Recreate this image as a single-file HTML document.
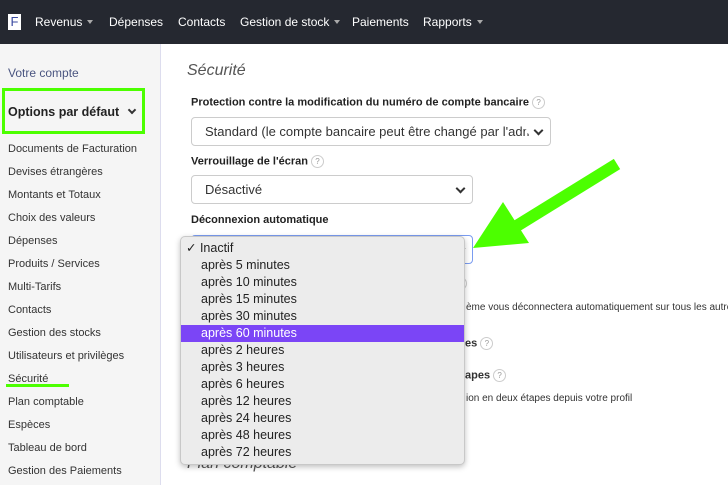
<!DOCTYPE html>
<html><head><meta charset="utf-8"><style>
*{box-sizing:border-box;margin:0;padding:0}
body{width:728px;height:485px;overflow:hidden;font-family:"Liberation Sans",Arial,sans-serif;background:#fff;position:relative;color:#333}
.nav{position:absolute;left:0;top:0;width:728px;height:44px;background:#252830;color:#fff;font-size:12px}
.nav span{position:absolute;top:15px}
.logo{position:absolute;left:8px;top:14px;width:13px;height:16px;background:#fff;color:#3a4aa0;font-size:13px;line-height:16px;text-align:center}
.car{display:inline-block;border-left:3.5px solid transparent;border-right:3.5px solid transparent;border-top:4px solid #aaa;vertical-align:2px;margin-left:5px}
.side{position:absolute;left:0;top:44px;width:161px;height:441px;background:#f5f5f5;border-right:1px solid #dde}
.side div{position:absolute;left:8px;font-size:11px;color:#333}
.q{display:inline-block;width:13px;height:13px;border:1px solid #ccc;border-radius:50%;font-size:8px;line-height:11px;text-align:center;color:#999;vertical-align:middle;font-weight:normal}
.lbl{position:absolute;left:191px;font-size:11px;font-weight:bold;color:#222}
.sel{position:absolute;left:191px;height:29px;border:1px solid #ccc;border-radius:4px;font-size:13px;padding:6px 0 0 13px;color:#333;overflow:hidden;white-space:nowrap;background:#fff}
.chev{position:absolute;right:8px;top:9px;width:7px;height:7px;border-right:2px solid #333;border-bottom:2px solid #333;transform:rotate(45deg)}
.dd{position:absolute;left:180px;top:236px;width:285px;height:229px;background:#ececec;border:1px solid #c8c8c8;border-radius:5px;box-shadow:0 2px 6px rgba(0,0,0,.25);font-size:12.5px;color:#222}
.dd div{position:absolute;left:0;width:100%;height:17px;padding-left:20px;line-height:17px}
.dd .hi{background:#7b45f6;color:#fff}
.t{position:absolute;font-size:10px;color:#333;white-space:nowrap}
</style></head><body>
<div class="nav">
<div class="logo">F</div>
<span style="left:35px">Revenus<i class="car"></i></span>
<span style="left:109px">Dépenses</span>
<span style="left:178px">Contacts</span>
<span style="left:240px">Gestion de stock<i class="car"></i></span>
<span style="left:352px">Paiements</span>
<span style="left:423px">Rapports<i class="car"></i></span>
</div>
<div class="side">
<div style="top:22px;font-size:12px;color:#4a5580">Votre compte</div>
<div style="left:2px;top:44px;width:143px;height:46px;border:3px solid #4cff00"></div>
<div style="top:61px;font-size:12.5px;font-weight:bold;color:#222">Options par défaut <span style="display:inline-block;width:6px;height:6px;border-right:2px solid #333;border-bottom:2px solid #333;transform:rotate(45deg);margin-left:6px;vertical-align:3px"></span></div>
<div style="top:99px">Documents de Facturation</div>
<div style="top:122px">Devises étrangères</div>
<div style="top:145px">Montants et Totaux</div>
<div style="top:168px">Choix des valeurs</div>
<div style="top:191px">Dépenses</div>
<div style="top:214px">Produits / Services</div>
<div style="top:237px">Multi-Tarifs</div>
<div style="top:260px">Contacts</div>
<div style="top:283px">Gestion des stocks</div>
<div style="top:306px">Utilisateurs et privilèges</div>
<div style="top:329px">Sécurité</div>
<div style="left:6px;top:340px;width:63px;height:3px;background:#4cff00"></div>
<div style="top:352px">Plan comptable</div>
<div style="top:375px">Espèces</div>
<div style="top:398px">Tableau de bord</div>
<div style="top:421px">Gestion des Paiements</div>
</div>
<div style="position:absolute;left:187px;top:62px;font-size:16px;font-style:italic;color:#555">Sécurité</div>
<div class="lbl" style="top:96px">Protection contre la modification du numéro de compte bancaire <span class="q">?</span></div>
<div class="sel" style="top:117px;width:360px;padding-right:28px">Standard (le compte bancaire peut être changé par l'adm<i class="chev" style="background:#fff;box-shadow:0 0 0 6px #fff"></i></div>
<div class="lbl" style="top:155px">Verrouillage de l'écran <span class="q">?</span></div>
<div class="sel" style="top:175px;width:282px">Désactivé<i class="chev"></i></div>
<div class="lbl" style="top:214px">Déconnexion automatique</div>
<div class="sel" style="top:235px;width:282px;border-color:#7a9cf0"><i class="chev"></i></div>
<div class="q" style="position:absolute;left:454px;top:277px">?</div>
<div class="t" style="left:466px;top:302px">ème vous déconnectera automatiquement sur tous les autres</div>
<div class="t" style="left:465px;top:337px;font-weight:bold;font-size:11px">es <span class="q">?</span></div>
<div class="t" style="left:465px;top:369px;font-weight:bold;font-size:11px">apes <span class="q">?</span></div>
<div class="t" style="left:466px;top:393px">ion en deux étapes depuis votre profil</div>
<div style="position:absolute;left:187px;top:455px;font-size:16px;font-style:italic;color:#555">Plan comptable</div>
<div class="dd">
<div style="top:3px;padding-left:5px">✓ Inactif</div>
<div style="top:20px">après 5 minutes</div>
<div style="top:37px">après 10 minutes</div>
<div style="top:54px">après 15 minutes</div>
<div style="top:71px">après 30 minutes</div>
<div class="hi" style="top:88px">après 60 minutes</div>
<div style="top:105px">après 2 heures</div>
<div style="top:122px">après 3 heures</div>
<div style="top:139px">après 6 heures</div>
<div style="top:156px">après 12 heures</div>
<div style="top:173px">après 24 heures</div>
<div style="top:190px">après 48 heures</div>
<div style="top:207px">après 72 heures</div>
</div>
<svg style="position:absolute;left:0;top:0" width="728" height="485">
<line x1="617" y1="164" x2="515" y2="227" stroke="#4cff00" stroke-width="12"/>
<polygon points="473,248 503,202 529,243" fill="#4cff00"/>
</svg>
</body></html>
